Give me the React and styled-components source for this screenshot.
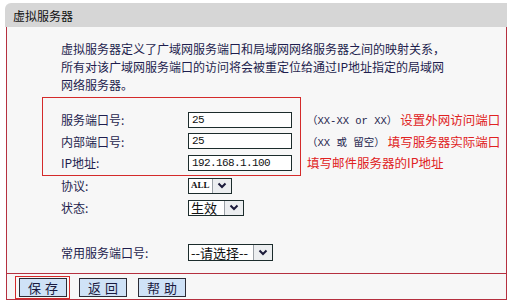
import React from 'react';
import styled, { createGlobalStyle } from 'styled-components';

const GlobalStyle = createGlobalStyle`
  body {
    margin: 0;
    background: #ffffff;
    font-family: "Noto Sans CJK SC", "Liberation Sans", sans-serif;
  }
`;

const Page = styled.div`
  margin: 3px 0 0 5px;
  width: 502px;
`;

const TitleBar = styled.div`
  height: 24px;
  background: #d6d6d6;
  border-top-left-radius: 6px;
  padding-left: 8px;
  display: flex;
  align-items: center;
  font-size: 12px;
  color: #111;
`;

const Panel = styled.div`
  margin-left: 1px;
  width: 499px;
  background: #f7f7f7;
  border: 1px solid #b5303f;
  border-top: none;
`;

const Intro = styled.div`
  padding: 13px 0 0 54px;
  margin-bottom: 3px;
  font-size: 12px;
  line-height: 18px;
  color: #1e1e4e;
  white-space: nowrap;
`;

const FieldArea = styled.div`
  display: flex;
  margin-left: 35px;
`;

const RedBox = styled.div`
  border: 1px solid #d42a2a;
  padding: 11px 7px 1px 18px;
  width: 232px;
`;

const Row = styled.div`
  display: flex;
  align-items: center;
  height: ${p => p.$h || 21.5}px;
`;

const Label = styled.div`
  width: 127px;
  font-size: 12px;
  color: #1e1e4e;
`;

const Input = styled.div`
  box-sizing: border-box;
  width: 104px;
  height: 16px;
  border: 1px solid #1c2c2c;
  background: #fff;
  padding-left: 3px;
  font-family: "Liberation Mono", monospace;
  font-size: 11px;
  letter-spacing: -0.6px;
  line-height: 14px;
  color: #111;
`;

const Hints = styled.div`
  padding: 12px 0 0 6px;
`;

const HintRow = styled.div`
  display: flex;
  align-items: center;
  height: 21.5px;
  white-space: nowrap;
`;

const Note = styled.span`
  font-family: "Liberation Mono", "Noto Sans CJK SC", monospace;
  font-size: 10.5px;
  color: #1e1e4e;
  margin-right: 3px;
`;

const RedText = styled.span`
  font-size: 12.5px;
  color: #e02222;
`;

const Lower = styled.div`
  margin-top: -1px;
  padding: 0 0 10px 54px;
`;

const Spacer = styled.div`
  height: 22.5px;
`;

const SelectBox = styled.div`
  box-sizing: border-box;
  display: flex;
  width: ${p => p.$w}px;
  height: ${p => p.$h || 16}px;
  border: 1px solid #1c2c2c;
  background: #fff;
`;

const SelectText = styled.div`
  flex: 1;
  padding-left: 2px;
  display: flex;
  align-items: center;
  font-size: ${p => p.$small ? 9 : 13}px;
  line-height: 1;
  font-family: ${p => p.$small ? '"Liberation Serif", serif' : '"Noto Sans CJK SC", sans-serif'};
  font-weight: ${p => p.$small ? 700 : 400};
  color: #111;
  white-space: nowrap;
`;

const ArrowBtn = styled.div`
  width: 18px;
  display: flex;
  align-items: center;
  justify-content: center;
  background: #eceef0;
  border-left: 1px solid #9aa0a6;
`;

const Footer = styled.div`
  border-top: 1px solid #b5303f;
  display: flex;
  align-items: flex-start;
  padding: 2px 0 0 8px;
  box-sizing: border-box;
  height: 26px;
`;

const Highlight = styled.div`
  border: 1px solid #d42a2a;
  padding: 1px 2px 1px 3px;
`;

const Button = styled.div`
  box-sizing: border-box;
  width: 48px;
  height: 19px;
  margin-left: ${p => p.$ml || 0}px;
  margin-top: ${p => p.$mt || 0}px;
  padding-left: 4px;
  background: #cfe2f7;
  border: 1px solid #2b2b35;
  display: flex;
  align-items: center;
  justify-content: center;
  font-size: 13px;
  letter-spacing: 4px;
  color: #1a1a40;
`;

const Chevron = () => (
  <svg width="10" height="7" viewBox="0 0 10 7">
    <path d="M1.5 1.5 L5 5 L8.5 1.5" fill="none" stroke="#1a1a3a" strokeWidth="2" />
  </svg>
);

const Select = ({ w, h, small, children }) => (
  <SelectBox $w={w} $h={h}>
    <SelectText $small={small}>{children}</SelectText>
    <ArrowBtn><Chevron /></ArrowBtn>
  </SelectBox>
);

export default function App() {
  return (
    <Page>
      <GlobalStyle />
      <TitleBar>虚拟服务器</TitleBar>
      <Panel>
        <Intro>
          虚拟服务器定义了广域网服务端口和局域网网络服务器之间的映射关系，<br />
          所有对该广域网服务端口的访问将会被重定位给通过IP地址指定的局域网<br />
          网络服务器。
        </Intro>
        <FieldArea>
          <RedBox>
            <Row>
              <Label>服务端口号:</Label>
              <Input>25</Input>
            </Row>
            <Row>
              <Label>内部端口号:</Label>
              <Input>25</Input>
            </Row>
            <Row>
              <Label>IP地址:</Label>
              <Input>192.168.1.100</Input>
            </Row>
          </RedBox>
          <Hints>
            <HintRow>
              <Note>（XX-XX or XX）</Note>
              <RedText>设置外网访问端口</RedText>
            </HintRow>
            <HintRow>
              <Note>（XX 或 留空）</Note>
              <RedText>填写服务器实际端口</RedText>
            </HintRow>
            <HintRow>
              <RedText>填写邮件服务器的IP地址</RedText>
            </HintRow>
          </Hints>
        </FieldArea>
        <Lower>
          <Row $h={22}>
            <Label>协议:</Label>
            <Select w={44} small>ALL</Select>
          </Row>
          <Row $h={22}>
            <Label>状态:</Label>
            <Select w={56}>生效</Select>
          </Row>
          <Spacer />
          <Row $h={22}>
            <Label>常用服务端口号:</Label>
            <Select w={85} h={17}>--请选择--</Select>
          </Row>
        </Lower>
        <Footer>
          <Highlight>
            <Button>保存</Button>
          </Highlight>
          <Button $ml={9} $mt={2}>返回</Button>
          <Button $ml={11} $mt={2}>帮助</Button>
        </Footer>
      </Panel>
    </Page>
  );
}
